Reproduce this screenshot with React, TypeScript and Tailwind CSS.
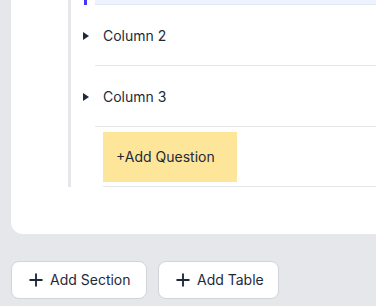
import { Plus } from 'lucide-react'

const columns = ['Column 2', 'Column 3']

function Caret() {
  return (
    <svg width="6" height="8" viewBox="0 0 6 8" className="text-[#1e293b]">
      <path d="M0 0 L6 4 L0 8 Z" fill="currentColor" />
    </svg>
  )
}

export default function App() {
  return (
    <div className="h-[306px] overflow-hidden bg-[#e5e7eb] font-['Inter',sans-serif] text-sm">
      <div className="ml-[11px] rounded-bl-xl bg-white pb-[47px] pl-[57px]">
        <div className="border-l-[3px] border-[#e5e7eb]">
          {/* tail of the selected row above */}
          <div className="flex h-[5px]">
            <div className="flex w-[24px] pl-[13px]">
              <div className="h-[5px] w-[3px] bg-[#4338f5]" />
            </div>
            <div className="flex-1 border-b border-[#e2e8f0] bg-[#eef2ff]" />
          </div>

          {columns.map((col) => (
            <div key={col} className="flex h-[61px]">
              <div className="flex w-[24px] items-center pl-[12px] pt-[1px]">
                <Caret />
              </div>
              <div className="flex flex-1 items-center border-b border-[#e5e7eb] pl-2 pt-[1px] text-[#1e293b]">
                {col}
              </div>
            </div>
          ))}

          <div className="ml-[32px] border-b border-[#e5e7eb] pt-[5px] pb-[4px]">
            <button className="flex h-[50px] w-[134px] items-center bg-[#fde59a] pl-[13px] text-[#1f2937]">
              +Add Question
            </button>
          </div>
        </div>
      </div>

      <div className="mt-[27px] flex gap-[11px] pl-[11px]">
        <button className="flex h-[38px] w-[136px] items-center gap-[4px] rounded-lg border border-[#d1d5db] bg-white pl-[14px] text-[#1e293b]">
          <Plus size={20} strokeWidth={2.25} />
          Add Section
        </button>
        <button className="flex h-[38px] w-[121px] items-center gap-[4px] rounded-lg border border-[#d1d5db] bg-white pl-[14px] text-[#1e293b]">
          <Plus size={20} strokeWidth={2.25} />
          Add Table
        </button>
      </div>
    </div>
  )
}
